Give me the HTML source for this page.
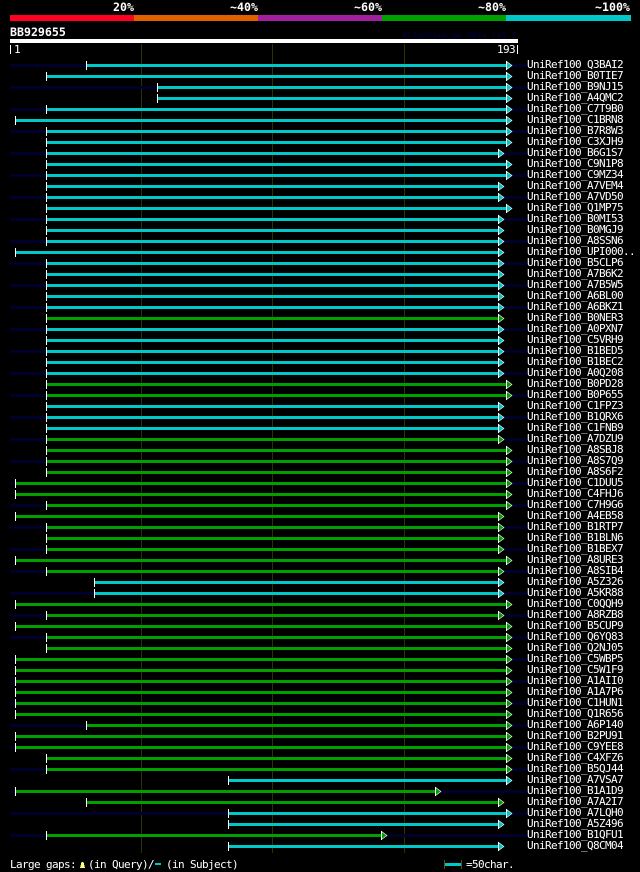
<!DOCTYPE html>
<html><head><meta charset="utf-8"><title>BB929655</title>
<style>
html,body{margin:0;padding:0;background:#000;width:640px;height:872px;overflow:hidden}
svg{display:block;shape-rendering:crispEdges}
text{font-family:"DejaVu Sans Mono","Liberation Mono",monospace;font-size:11px;letter-spacing:-.62px;fill:#fff;white-space:pre}
text.b{font-weight:bold;font-size:11.6px;letter-spacing:0}
.c{fill:#00c8c8}
.g{fill:#00a000}
.r text{fill:#fff}
.t{shape-rendering:auto;stroke:#fff;stroke-width:.6}
</style></head><body>
<svg width="640" height="872" viewBox="0 0 640 872" xmlns="http://www.w3.org/2000/svg">
<defs>
<g id="la"><polygon class="t" points="506.3,-2.7 512,1.5 506.3,5.7"/><rect x="506" y="-3" width="1" height="9" fill="#fff"/></g>
<g id="sa"><polygon class="t" points="498.3,-2.7 504,1.5 498.3,5.7"/><rect x="498" y="-3" width="1" height="9" fill="#fff"/></g>
<g id="L15"><rect x="16" width="490" height="3"/><rect x="15" y="-3" width="1" height="9" fill="#fff"/><use href="#la"/></g>
<g id="L46"><rect x="47" width="459" height="3"/><rect x="46" y="-3" width="1" height="9" fill="#fff"/><use href="#la"/></g>
<g id="L86"><rect x="87" width="419" height="3"/><rect x="86" y="-3" width="1" height="9" fill="#fff"/><use href="#la"/></g>
<g id="L157"><rect x="158" width="348" height="3"/><rect x="157" y="-3" width="1" height="9" fill="#fff"/><use href="#la"/></g>
<g id="L228"><rect x="229" width="277" height="3"/><rect x="228" y="-3" width="1" height="9" fill="#fff"/><use href="#la"/></g>
<g id="S15"><rect x="16" width="482" height="3"/><rect x="15" y="-3" width="1" height="9" fill="#fff"/><use href="#sa"/></g>
<g id="S46"><rect x="47" width="451" height="3"/><rect x="46" y="-3" width="1" height="9" fill="#fff"/><use href="#sa"/></g>
<g id="S86"><rect x="87" width="411" height="3"/><rect x="86" y="-3" width="1" height="9" fill="#fff"/><use href="#sa"/></g>
<g id="S94"><rect x="95" width="403" height="3"/><rect x="94" y="-3" width="1" height="9" fill="#fff"/><use href="#sa"/></g>
<g id="S228"><rect x="229" width="269" height="3"/><rect x="228" y="-3" width="1" height="9" fill="#fff"/><use href="#sa"/></g>
<pattern id="p" x="0" y="64" width="640" height="22" patternUnits="userSpaceOnUse"><rect width="640" height="3" fill="#00002c"/></pattern>
</defs>
<rect width="640" height="872" fill="#000"/>
<text class="b" x="113" y="11">20%</text>
<text class="b" x="230" y="11">~40%</text>
<text class="b" x="354" y="11">~60%</text>
<text class="b" x="478" y="11">~80%</text>
<text class="b" x="595" y="11">~100%</text>
<rect x="10" y="15" width="124" height="6" fill="#ff0022"/>
<rect x="134" y="15" width="124" height="6" fill="#e06000"/>
<rect x="258" y="15" width="124" height="6" fill="#a020a0"/>
<rect x="382" y="15" width="124" height="6" fill="#00a000"/>
<rect x="506" y="15" width="125" height="6" fill="#00c8c8"/>
<text class="b" x="10" y="36">BB929655</text>
<text x="402" y="38" style="font-size:8.3px;font-weight:bold;letter-spacing:0;fill:#000033">AlignView.pm Beta rel.7</text>
<rect x="10" y="39" width="508" height="4" fill="#fff"/>
<rect x="10" y="45" width="1" height="9" fill="#fff"/>
<text x="14" y="53">1</text>
<text x="497" y="53">193</text>
<rect x="517" y="45" width="1" height="9" fill="#fff"/>
<rect x="141" y="44" width="1" height="809" fill="#303000"/>
<rect x="272" y="44" width="1" height="809" fill="#303000"/>
<rect x="404" y="44" width="1" height="809" fill="#303000"/>
<rect x="10" y="64" width="517" height="773" fill="url(#p)"/>
<g class="r">
<g class="c" transform="translate(0,64)"><use href="#L86"/><text x="527" y="4">UniRef100_Q3BAI2</text></g>
<g class="c" transform="translate(0,75)"><use href="#L46"/><text x="527" y="4">UniRef100_B0TIE7</text></g>
<g class="c" transform="translate(0,86)"><use href="#L157"/><text x="527" y="4">UniRef100_B9NJ15</text></g>
<g class="c" transform="translate(0,97)"><use href="#L157"/><text x="527" y="4">UniRef100_A4QMC2</text></g>
<g class="c" transform="translate(0,108)"><use href="#L46"/><text x="527" y="4">UniRef100_C7T9B0</text></g>
<g class="c" transform="translate(0,119)"><use href="#L15"/><text x="527" y="4">UniRef100_C1BRN8</text></g>
<g class="c" transform="translate(0,130)"><use href="#L46"/><text x="527" y="4">UniRef100_B7R8W3</text></g>
<g class="c" transform="translate(0,141)"><use href="#L46"/><text x="527" y="4">UniRef100_C3XJH9</text></g>
<g class="c" transform="translate(0,152)"><use href="#S46"/><text x="527" y="4">UniRef100_B6G1S7</text></g>
<g class="c" transform="translate(0,163)"><use href="#L46"/><text x="527" y="4">UniRef100_C9N1P8</text></g>
<g class="c" transform="translate(0,174)"><use href="#L46"/><text x="527" y="4">UniRef100_C9MZ34</text></g>
<g class="c" transform="translate(0,185)"><use href="#S46"/><text x="527" y="4">UniRef100_A7VEM4</text></g>
<g class="c" transform="translate(0,196)"><use href="#S46"/><text x="527" y="4">UniRef100_A7VD50</text></g>
<g class="c" transform="translate(0,207)"><use href="#L46"/><text x="527" y="4">UniRef100_Q1MP75</text></g>
<g class="c" transform="translate(0,218)"><use href="#S46"/><text x="527" y="4">UniRef100_B0MI53</text></g>
<g class="c" transform="translate(0,229)"><use href="#S46"/><text x="527" y="4">UniRef100_B0MGJ9</text></g>
<g class="c" transform="translate(0,240)"><use href="#S46"/><text x="527" y="4">UniRef100_A8SSN6</text></g>
<g class="c" transform="translate(0,251)"><use href="#S15"/><text x="527" y="4">UniRef100_UPI000..</text></g>
<g class="c" transform="translate(0,262)"><use href="#S46"/><text x="527" y="4">UniRef100_B5CLP6</text></g>
<g class="c" transform="translate(0,273)"><use href="#S46"/><text x="527" y="4">UniRef100_A7B6K2</text></g>
<g class="c" transform="translate(0,284)"><use href="#S46"/><text x="527" y="4">UniRef100_A7B5W5</text></g>
<g class="c" transform="translate(0,295)"><use href="#S46"/><text x="527" y="4">UniRef100_A6BL00</text></g>
<g class="c" transform="translate(0,306)"><use href="#S46"/><text x="527" y="4">UniRef100_A6BKZ1</text></g>
<g class="g" transform="translate(0,317)"><use href="#S46"/><text x="527" y="4">UniRef100_B0NER3</text></g>
<g class="c" transform="translate(0,328)"><use href="#S46"/><text x="527" y="4">UniRef100_A0PXN7</text></g>
<g class="c" transform="translate(0,339)"><use href="#S46"/><text x="527" y="4">UniRef100_C5VRH9</text></g>
<g class="c" transform="translate(0,350)"><use href="#S46"/><text x="527" y="4">UniRef100_B1BED5</text></g>
<g class="c" transform="translate(0,361)"><use href="#S46"/><text x="527" y="4">UniRef100_B1BEC2</text></g>
<g class="c" transform="translate(0,372)"><use href="#S46"/><text x="527" y="4">UniRef100_A0Q208</text></g>
<g class="g" transform="translate(0,383)"><use href="#L46"/><text x="527" y="4">UniRef100_B0PD28</text></g>
<g class="g" transform="translate(0,394)"><use href="#L46"/><text x="527" y="4">UniRef100_B0P655</text></g>
<g class="c" transform="translate(0,405)"><use href="#S46"/><text x="527" y="4">UniRef100_C1FPZ3</text></g>
<g class="c" transform="translate(0,416)"><use href="#S46"/><text x="527" y="4">UniRef100_B1QRX6</text></g>
<g class="c" transform="translate(0,427)"><use href="#S46"/><text x="527" y="4">UniRef100_C1FNB9</text></g>
<g class="g" transform="translate(0,438)"><use href="#S46"/><text x="527" y="4">UniRef100_A7DZU9</text></g>
<g class="g" transform="translate(0,449)"><use href="#L46"/><text x="527" y="4">UniRef100_A8SBJ8</text></g>
<g class="g" transform="translate(0,460)"><use href="#L46"/><text x="527" y="4">UniRef100_A8S7Q9</text></g>
<g class="g" transform="translate(0,471)"><use href="#L46"/><text x="527" y="4">UniRef100_A8S6F2</text></g>
<g class="g" transform="translate(0,482)"><use href="#L15"/><text x="527" y="4">UniRef100_C1DUU5</text></g>
<g class="g" transform="translate(0,493)"><use href="#L15"/><text x="527" y="4">UniRef100_C4FHJ6</text></g>
<g class="g" transform="translate(0,504)"><use href="#L46"/><text x="527" y="4">UniRef100_C7H9G6</text></g>
<g class="g" transform="translate(0,515)"><use href="#S15"/><text x="527" y="4">UniRef100_A4EB58</text></g>
<g class="g" transform="translate(0,526)"><use href="#S46"/><text x="527" y="4">UniRef100_B1RTP7</text></g>
<g class="g" transform="translate(0,537)"><use href="#S46"/><text x="527" y="4">UniRef100_B1BLN6</text></g>
<g class="g" transform="translate(0,548)"><use href="#S46"/><text x="527" y="4">UniRef100_B1BEX7</text></g>
<g class="g" transform="translate(0,559)"><use href="#L15"/><text x="527" y="4">UniRef100_A8URE3</text></g>
<g class="g" transform="translate(0,570)"><use href="#S46"/><text x="527" y="4">UniRef100_A8SIB4</text></g>
<g class="c" transform="translate(0,581)"><use href="#S94"/><text x="527" y="4">UniRef100_A5Z326</text></g>
<g class="c" transform="translate(0,592)"><use href="#S94"/><text x="527" y="4">UniRef100_A5KR88</text></g>
<g class="g" transform="translate(0,603)"><use href="#L15"/><text x="527" y="4">UniRef100_C0QQH9</text></g>
<g class="g" transform="translate(0,614)"><use href="#S46"/><text x="527" y="4">UniRef100_A8RZB8</text></g>
<g class="g" transform="translate(0,625)"><use href="#L15"/><text x="527" y="4">UniRef100_B5CUP9</text></g>
<g class="g" transform="translate(0,636)"><use href="#L46"/><text x="527" y="4">UniRef100_Q6YQ83</text></g>
<g class="g" transform="translate(0,647)"><use href="#L46"/><text x="527" y="4">UniRef100_Q2NJ05</text></g>
<g class="g" transform="translate(0,658)"><use href="#L15"/><text x="527" y="4">UniRef100_C5WBP5</text></g>
<g class="g" transform="translate(0,669)"><use href="#L15"/><text x="527" y="4">UniRef100_C5W1F9</text></g>
<g class="g" transform="translate(0,680)"><use href="#L15"/><text x="527" y="4">UniRef100_A1AII0</text></g>
<g class="g" transform="translate(0,691)"><use href="#L15"/><text x="527" y="4">UniRef100_A1A7P6</text></g>
<g class="g" transform="translate(0,702)"><use href="#L15"/><text x="527" y="4">UniRef100_C1HUN1</text></g>
<g class="g" transform="translate(0,713)"><use href="#L15"/><text x="527" y="4">UniRef100_Q1R656</text></g>
<g class="g" transform="translate(0,724)"><use href="#L86"/><text x="527" y="4">UniRef100_A6P140</text></g>
<g class="g" transform="translate(0,735)"><use href="#L15"/><text x="527" y="4">UniRef100_B2PU91</text></g>
<g class="g" transform="translate(0,746)"><use href="#L15"/><text x="527" y="4">UniRef100_C9YEE8</text></g>
<g class="g" transform="translate(0,757)"><use href="#L46"/><text x="527" y="4">UniRef100_C4XFZ6</text></g>
<g class="g" transform="translate(0,768)"><use href="#L46"/><text x="527" y="4">UniRef100_B5QJ44</text></g>
<g class="c" transform="translate(0,779)"><use href="#L228"/><text x="527" y="4">UniRef100_A7VSA7</text></g>
<g class="g" transform="translate(0,790)"><rect x="16" width="419" height="3"/><rect x="15" y="-3" width="1" height="9" fill="#fff"/><polygon class="t" points="435.3,-2.7 441,1.5 435.3,5.7"/><rect x="435" y="-3" width="1" height="9" fill="#fff"/><text x="527" y="4">UniRef100_B1A1D9</text></g>
<g class="g" transform="translate(0,801)"><use href="#S86"/><text x="527" y="4">UniRef100_A7A2I7</text></g>
<g class="c" transform="translate(0,812)"><use href="#L228"/><text x="527" y="4">UniRef100_A7LQH0</text></g>
<g class="c" transform="translate(0,823)"><use href="#S228"/><text x="527" y="4">UniRef100_A5Z496</text></g>
<g class="g" transform="translate(0,834)"><rect x="47" width="334" height="3"/><rect x="46" y="-3" width="1" height="9" fill="#fff"/><polygon class="t" points="381.3,-2.7 387,1.5 381.3,5.7"/><rect x="381" y="-3" width="1" height="9" fill="#fff"/><text x="527" y="4">UniRef100_B1QFU1</text></g>
<g class="c" transform="translate(0,845)"><use href="#S228"/><text x="527" y="4">UniRef100_Q8CM04</text></g>
</g>
<text x="10" y="868">Large gaps:</text>
<polygon points="80,868 85,868 83.5,862 81.5,862" fill="#ffff80"/>
<text x="88" y="868">(in Query)/</text>
<rect x="155" y="863" width="6" height="2" fill="#00c8c8"/>
<text x="166" y="868">(in Subject)</text>
<rect x="444" y="860" width="1" height="9" fill="#605000"/>
<rect x="461" y="860" width="1" height="9" fill="#605000"/>
<rect x="445" y="863" width="16" height="3" fill="#00c8c8"/>
<text x="466" y="868">=50char.</text>
</svg>
</body></html>
